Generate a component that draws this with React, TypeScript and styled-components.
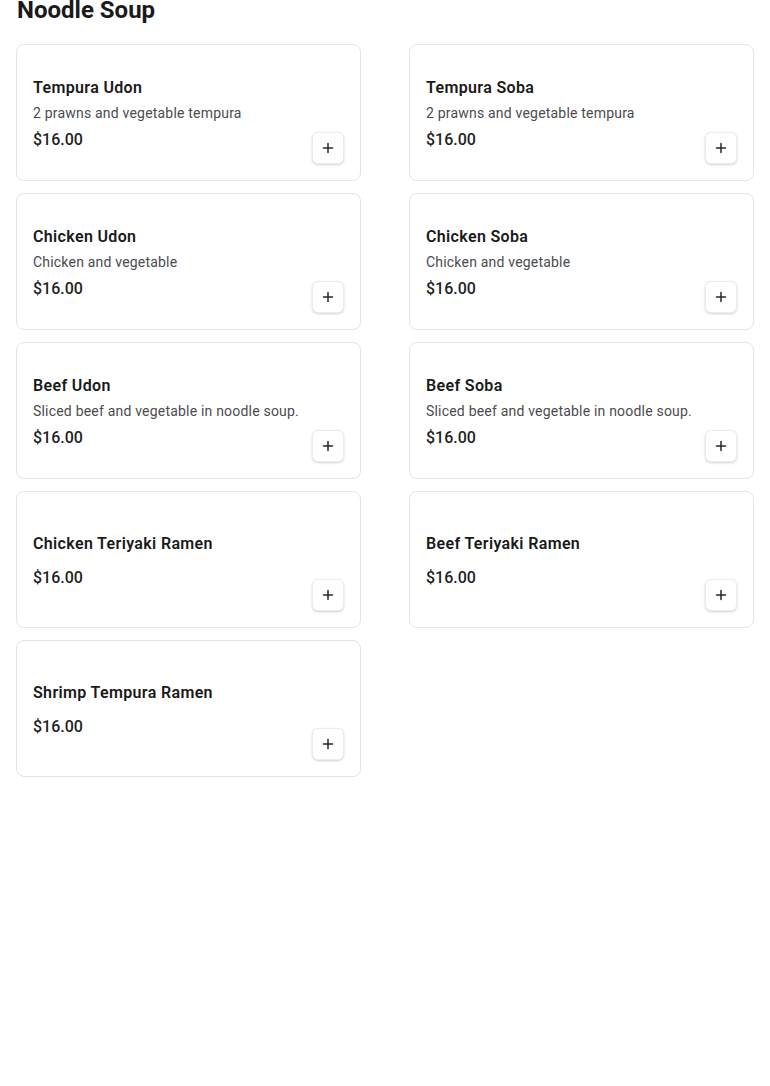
import React from "react";
import styled, { createGlobalStyle } from "styled-components";

const GlobalStyle = createGlobalStyle`
  html, body {
    margin: 0;
    padding: 0;
    background: #ffffff;
  }
  body {
    font-family: Roboto, "Liberation Sans", Arial, sans-serif;
    color: #1a1a1a;
    overflow: hidden;
  }
  * { box-sizing: border-box; }
`;

const Page = styled.main`
  padding: 0 16px;
  margin-top: -6px;
`;

const Heading = styled.h2`
  margin: 0 0 18px 1px;
  font-size: 24px;
  line-height: 32px;
  font-weight: 700;
  color: #1a1a1a;
`;

const Grid = styled.div`
  display: grid;
  grid-template-columns: 1fr 1fr;
  column-gap: 48px;
  row-gap: 12px;
`;

const Card = styled.div`
  display: flex;
  align-items: center;
  min-height: 137px;
  padding: 16px;
  border: 1px solid #e4e4e7;
  border-radius: 8px;
  background: #fff;
`;

const Info = styled.div<{ $compact: boolean }>`
  flex: 1;
  display: flex;
  flex-direction: column;
  padding-top: 2px;
`;

const Title = styled.h3`
  margin: 0;
  font-size: 16px;
  line-height: 24px;
  font-weight: 600;
  letter-spacing: 0.35px;
  color: #1a1a1a;
`;

const Desc = styled.p`
  margin: 3px 0 0;
  font-size: 14px;
  line-height: 20px;
  font-weight: 400;
  letter-spacing: 0.2px;
  color: #4b4b50;
`;

const Price = styled.span<{ $compact: boolean }>`
  margin-top: ${(p) => (p.$compact ? "10px" : "5px")};
  font-size: 16px;
  line-height: 24px;
  font-weight: 500;
  color: #1f1f1f;
`;

const AddButton = styled.button`
  align-self: flex-end;
  flex-shrink: 0;
  width: 32px;
  height: 32px;
  padding: 0;
  display: flex;
  align-items: center;
  justify-content: center;
  background: #fff;
  border: 1px solid #ececec;
  border-radius: 6px;
  box-shadow: 0 1px 3px rgba(0, 0, 0, 0.12), 0 1px 2px rgba(0, 0, 0, 0.06);
  cursor: pointer;
  color: #27272a;
`;

type Item = { name: string; desc?: string; price: string };

const items: Item[] = [
  { name: "Tempura Udon", desc: "2 prawns and vegetable tempura", price: "$16.00" },
  { name: "Tempura Soba", desc: "2 prawns and vegetable tempura", price: "$16.00" },
  { name: "Chicken Udon", desc: "Chicken and vegetable", price: "$16.00" },
  { name: "Chicken Soba", desc: "Chicken and vegetable", price: "$16.00" },
  { name: "Beef Udon", desc: "Sliced beef and vegetable in noodle soup.", price: "$16.00" },
  { name: "Beef Soba", desc: "Sliced beef and vegetable in noodle soup.", price: "$16.00" },
  { name: "Chicken Teriyaki Ramen", price: "$16.00" },
  { name: "Beef Teriyaki Ramen", price: "$16.00" },
  { name: "Shrimp Tempura Ramen", price: "$16.00" },
];

const PlusIcon = () => (
  <svg width="12" height="12" viewBox="0 0 12 12" fill="none" aria-hidden="true">
    <path d="M6 1.5v9M1.5 6h9" stroke="currentColor" strokeWidth="1.5" strokeLinecap="round" />
  </svg>
);

export default function App() {
  return (
    <>
      <GlobalStyle />
      <Page>
        <Heading>Noodle Soup</Heading>
        <Grid>
          {items.map((it) => (
            <Card key={it.name}>
              <Info $compact={!it.desc}>
                <Title>{it.name}</Title>
                {it.desc && <Desc>{it.desc}</Desc>}
                <Price $compact={!it.desc}>{it.price}</Price>
              </Info>
              <AddButton aria-label={`Add ${it.name}`}>
                <PlusIcon />
              </AddButton>
            </Card>
          ))}
        </Grid>
      </Page>
    </>
  );
}
